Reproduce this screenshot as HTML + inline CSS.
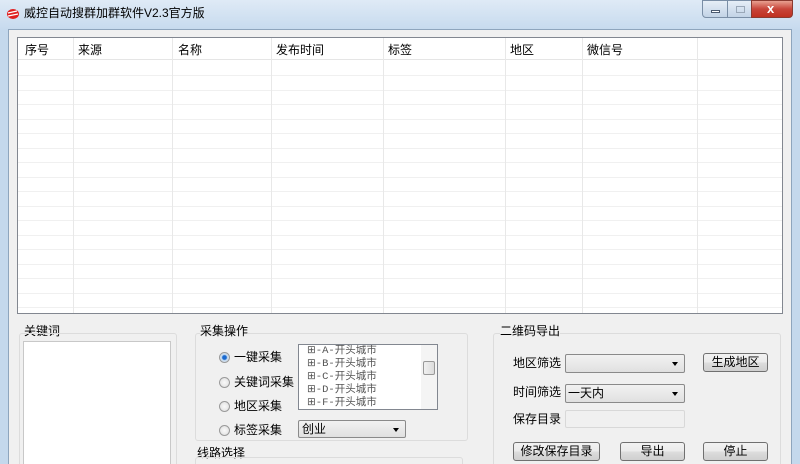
<!DOCTYPE html><html><head><meta charset="utf-8"><style>
*{box-sizing:border-box;margin:0;padding:0}
html,body{width:800px;height:464px;overflow:hidden}
body{position:relative;background:#c4d8ec;font-family:"Liberation Sans","Noto Sans CJK SC",sans-serif;font-size:12px;color:#000;line-height:14px}
.a{position:absolute}
#title{left:0;top:0;width:800px;height:30px;background:linear-gradient(#dfeaf6,#c6daee)}
#client{left:8px;top:29px;width:784px;height:436px;background:#f0f0f0;border:1px solid #8ea5bd;border-bottom:none}
.t{white-space:nowrap}
.grp{border:1px solid #dcdcdc;border-radius:3px}
.btn{border:1px solid #707070;border-radius:3px;background:linear-gradient(#f2f2f2,#ebebeb 50%,#dddddd 51%,#cfcfcf);text-align:center;line-height:16px}
.cb{border:1px solid #8a8a8a;border-radius:2px;background:linear-gradient(#f2f2f2,#e0e0e0)}
.cb:after{content:"";position:absolute;right:6px;top:7px;border:3px solid transparent;border-top:4px solid #000}
.rad{width:11px;height:11px;border-radius:50%;border:1px solid #9a9a9a;background:radial-gradient(#fafafa,#dcdcdc)}
</style></head><body>
<div class="a" id="title"></div>
<div class="a" style="left:6px;top:8px;width:14px;height:12px">
<svg width="14" height="12"><ellipse cx="7" cy="6" rx="6" ry="5" fill="#e02020"/><path d="M2 5 L11 3 M2 8 L12 6" stroke="#fff" stroke-width="1.3"/></svg></div>
<div class="a t" style="left:24px;top:6px;font-size:12px">威控自动搜群加群软件V2.3官方版</div>
<div class="a" style="left:702px;top:0;width:26px;height:18px;border:1px solid #7a8ea6;border-radius:0 0 0 4px;background:linear-gradient(#e6eef7,#c2d3e6)"><div class="a" style="left:8px;top:9px;width:9px;height:3px;background:#fff;border:1px solid #4a5a70"></div></div>
<div class="a" style="left:727px;top:0;width:25px;height:18px;border:1px solid #7a8ea6;background:linear-gradient(#e6eef7,#c2d3e6)"><div class="a" style="left:8px;top:5px;width:9px;height:7px;border:1px solid #9aa8b8"></div></div>
<div class="a" style="left:751px;top:0;width:42px;height:18px;border:1px solid #8a3a30;border-radius:0 0 4px 0;background:linear-gradient(#e8a090,#c8453a 50%,#c03020)"><div class="a t" style="left:15px;top:1px;color:#fff;font-weight:bold;font-size:13px">x</div></div>
<div class="a" id="client"></div>
<div class="a" style="left:17px;top:37px;width:766px;height:277px;border:1px solid #828790;background:#fff;overflow:hidden">
<div class="a" style="left:0;top:0;width:766px;height:22px;border-bottom:1px solid #e5e5e5"></div>
<svg class="a" style="left:0;top:0" width="766" height="277">
<g stroke="#f0f0f0">
<line x1="0" y1="37.5" x2="766" y2="37.5"/><line x1="0" y1="52.5" x2="766" y2="52.5"/><line x1="0" y1="66.5" x2="766" y2="66.5"/><line x1="0" y1="81.5" x2="766" y2="81.5"/><line x1="0" y1="95.5" x2="766" y2="95.5"/><line x1="0" y1="110.5" x2="766" y2="110.5"/><line x1="0" y1="124.5" x2="766" y2="124.5"/><line x1="0" y1="139.5" x2="766" y2="139.5"/><line x1="0" y1="153.5" x2="766" y2="153.5"/><line x1="0" y1="168.5" x2="766" y2="168.5"/><line x1="0" y1="182.5" x2="766" y2="182.5"/><line x1="0" y1="197.5" x2="766" y2="197.5"/><line x1="0" y1="211.5" x2="766" y2="211.5"/><line x1="0" y1="226.5" x2="766" y2="226.5"/><line x1="0" y1="240.5" x2="766" y2="240.5"/><line x1="0" y1="255.5" x2="766" y2="255.5"/><line x1="0" y1="269.5" x2="766" y2="269.5"/>
</g><g stroke="#e8e8e8">
<line x1="55.5" y1="0" x2="55.5" y2="277"/><line x1="154.5" y1="0" x2="154.5" y2="277"/><line x1="253.5" y1="0" x2="253.5" y2="277"/><line x1="365.5" y1="0" x2="365.5" y2="277"/><line x1="487.5" y1="0" x2="487.5" y2="277"/><line x1="564.5" y1="0" x2="564.5" y2="277"/><line x1="679.5" y1="0" x2="679.5" y2="277"/></g></svg>
<div class="a t" style="left:7px;top:5px">序号</div><div class="a t" style="left:60px;top:5px">来源</div><div class="a t" style="left:160px;top:5px">名称</div><div class="a t" style="left:258px;top:5px">发布时间</div><div class="a t" style="left:370px;top:5px">标签</div><div class="a t" style="left:492px;top:5px">地区</div><div class="a t" style="left:569px;top:5px">微信号</div>
</div>
<div class="a t" style="left:24px;top:324px">关键词</div>
<div class="a grp" style="left:19px;top:333px;width:158px;height:140px"></div>
<div class="a" style="left:23px;top:341px;width:148px;height:130px;background:#fff;border:1px solid #c8c8c8"></div>
<div class="a grp" style="left:195px;top:333px;width:273px;height:108px"></div>
<div class="a t" style="left:200px;top:324px;background:#f0f0f0">采集操作</div>
<div class="a rad" style="left:219px;top:352px;background:radial-gradient(#1a6ad0 30%,#bfd6ee 45%,#f0f0f0)"></div><div class="a t" style="left:234px;top:350px">一键采集</div>
<div class="a rad" style="left:219px;top:377px"></div><div class="a t" style="left:234px;top:375px">关键词采集</div>
<div class="a rad" style="left:219px;top:401px"></div><div class="a t" style="left:234px;top:399px">地区采集</div>
<div class="a rad" style="left:219px;top:425px"></div><div class="a t" style="left:234px;top:423px">标签采集</div>
<div class="a" style="left:298px;top:344px;width:140px;height:66px;background:#fff;border:1px solid #828790;overflow:hidden;font-family:'Liberation Mono','Noto Sans CJK SC',monospace;font-size:10.5px;color:#555;line-height:13px">
<div style="padding:0 0 0 8px">⊞-A-开头城市<br>⊞-B-开头城市<br>⊞-C-开头城市<br>⊞-D-开头城市<br>⊞-F-开头城市</div>
<div class="a" style="right:0;top:0;width:16px;height:64px;background:#f4f4f4"></div>
<div class="a" style="right:2px;top:16px;width:12px;height:14px;border:1px solid #999;border-radius:2px;background:linear-gradient(90deg,#f0f0f0,#dcdcdc)"></div>
</div>
<div class="a cb" style="left:298px;top:420px;width:108px;height:18px"><div class="a t" style="left:3px;top:1px">创业</div></div>
<div class="a t" style="left:197px;top:446px">线路选择</div>
<div class="a grp" style="left:195px;top:457px;width:268px;height:20px"></div>
<div class="a grp" style="left:493px;top:333px;width:288px;height:140px"></div>
<div class="a t" style="left:500px;top:324px;background:#f0f0f0">二维码导出</div>
<div class="a t" style="left:513px;top:356px">地区筛选</div>
<div class="a cb" style="left:565px;top:354px;width:120px;height:19px"></div>
<div class="a btn" style="left:703px;top:353px;width:65px;height:19px">生成地区</div>
<div class="a t" style="left:513px;top:385px">时间筛选</div>
<div class="a cb" style="left:565px;top:384px;width:120px;height:19px"><div class="a t" style="left:2px;top:1px">一天内</div></div>
<div class="a t" style="left:513px;top:412px">保存目录</div>
<div class="a" style="left:565px;top:410px;width:120px;height:18px;border:1px solid #d8d8d8;border-radius:2px;background:#f0f0f0"></div>
<div class="a btn" style="left:513px;top:442px;width:87px;height:19px">修改保存目录</div>
<div class="a btn" style="left:620px;top:442px;width:65px;height:19px">导出</div>
<div class="a btn" style="left:703px;top:442px;width:65px;height:19px">停止</div>
</body></html>
